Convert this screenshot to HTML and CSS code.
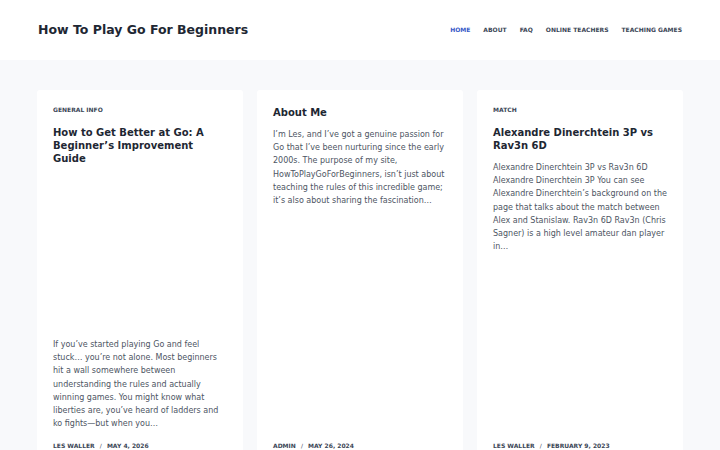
FILE: index.html
```html
<!DOCTYPE html>
<html lang="en">
<head>
    <meta charset="UTF-8">
    <meta name="viewport" content="width=device-width, initial-scale=1.0">
    <title>How To Play Go For Beginners</title>
    <link rel="stylesheet" href="styles.css">
</head>
<body>
    <!-- Site header -->
    <header class="site-header">
        <div class="wrap header-inner">
            <a class="site-title" href="#">How To Play Go For Beginners</a>
            <nav class="main-nav">
                <a class="current" href="#">Home</a>
                <a href="#">About</a>
                <a href="#">FAQ</a>
                <a href="#">Online Teachers</a>
                <a href="#">Teaching Games</a>
            </nav>
        </div>
    </header>

    <!-- Post grid -->
    <main class="wrap posts">
        <article class="card">
            <span class="cat">General Info</span>
            <h2 class="card-title">How to Get Better at Go: A Beginner’s Improvement Guide</h2>
            <div class="thumb"></div>
            <p class="excerpt">If you’ve started playing Go and feel stuck… you’re not alone. Most beginners hit a wall somewhere between understanding the rules and actually winning games. You might know what liberties are, you’ve heard of ladders and ko fights—but when you…</p>
            <div class="meta">Les Waller <span class="sep">/</span> May 4, 2026</div>
        </article>

        <article class="card">
            <h2 class="card-title">About Me</h2>
            <p class="excerpt">I’m Les, and I’ve got a genuine passion for Go that I’ve been nurturing since the early 2000s. The purpose of my site, HowToPlayGoForBeginners, isn’t just about teaching the rules of this incredible game; it’s also about sharing the fascination…</p>
            <div class="meta">Admin <span class="sep">/</span> May 26, 2024</div>
        </article>

        <article class="card">
            <span class="cat">Match</span>
            <h2 class="card-title">Alexandre Dinerchtein 3P vs Rav3n 6D</h2>
            <p class="excerpt">Alexandre Dinerchtein 3P vs Rav3n 6D Alexandre Dinerchtein 3P You can see Alexandre Dinerchtein’s background on the page that talks about the match between Alex and Stanislaw. Rav3n 6D Rav3n (Chris Sagner) is a high level amateur dan player in…</p>
            <div class="meta">Les Waller <span class="sep">/</span> February 9, 2023</div>
        </article>
    </main>
</body>
</html>
```

FILE: styles.css
```css
* {
    margin: 0;
    padding: 0;
    box-sizing: border-box;
}

body {
    background-color: #f8f9fb;
    color: #3f4753;
    font-family: "DejaVu Sans", sans-serif;
}

a {
    text-decoration: none;
    color: inherit;
}

.wrap {
    width: 646px;
    margin: 0 auto;
}

/* Header */
.site-header {
    background: #fff;
    height: 60px;
}

.header-inner {
    height: 100%;
    display: flex;
    align-items: center;
    justify-content: space-between;
    padding-left: 1px;
    padding-bottom: 2px;
}

.site-title {
    font-size: 12.5px;
    font-weight: bold;
    color: #1e2733;
}

.main-nav {
    display: flex;
    gap: 13px;
    padding-right: 1px;
}

.main-nav a {
    font-size: 6px;
    font-weight: bold;
    text-transform: uppercase;
    color: #3b4656;
}

.main-nav a.current {
    color: #3659c7;
}

/* Cards */
.posts {
    display: grid;
    grid-template-columns: repeat(3, 1fr);
    gap: 14px;
    padding-top: 30px;
}

.card {
    background: #fff;
    border-radius: 3px;
    padding: 16px;
    display: flex;
    flex-direction: column;
    min-height: 374px;
}

.cat {
    font-size: 6px;
    line-height: 7px;
    font-weight: bold;
    text-transform: uppercase;
    color: #3b4656;
    margin-bottom: 13px;
}

.card-title {
    font-size: 10px;
    line-height: 13px;
    font-weight: bold;
    color: #1e2733;
    margin-bottom: 9px;
}

.thumb {
    height: 164px;
}

.excerpt {
    font-size: 8px;
    line-height: 13.2px;
    color: #4d5563;
}

.meta {
    margin-top: auto;
    padding-top: 12px;
    font-size: 6px;
    line-height: 8px;
    font-weight: bold;
    text-transform: uppercase;
    color: #3b4656;
}

.sep {
    margin: 0 3px;
    font-weight: normal;
}
```
